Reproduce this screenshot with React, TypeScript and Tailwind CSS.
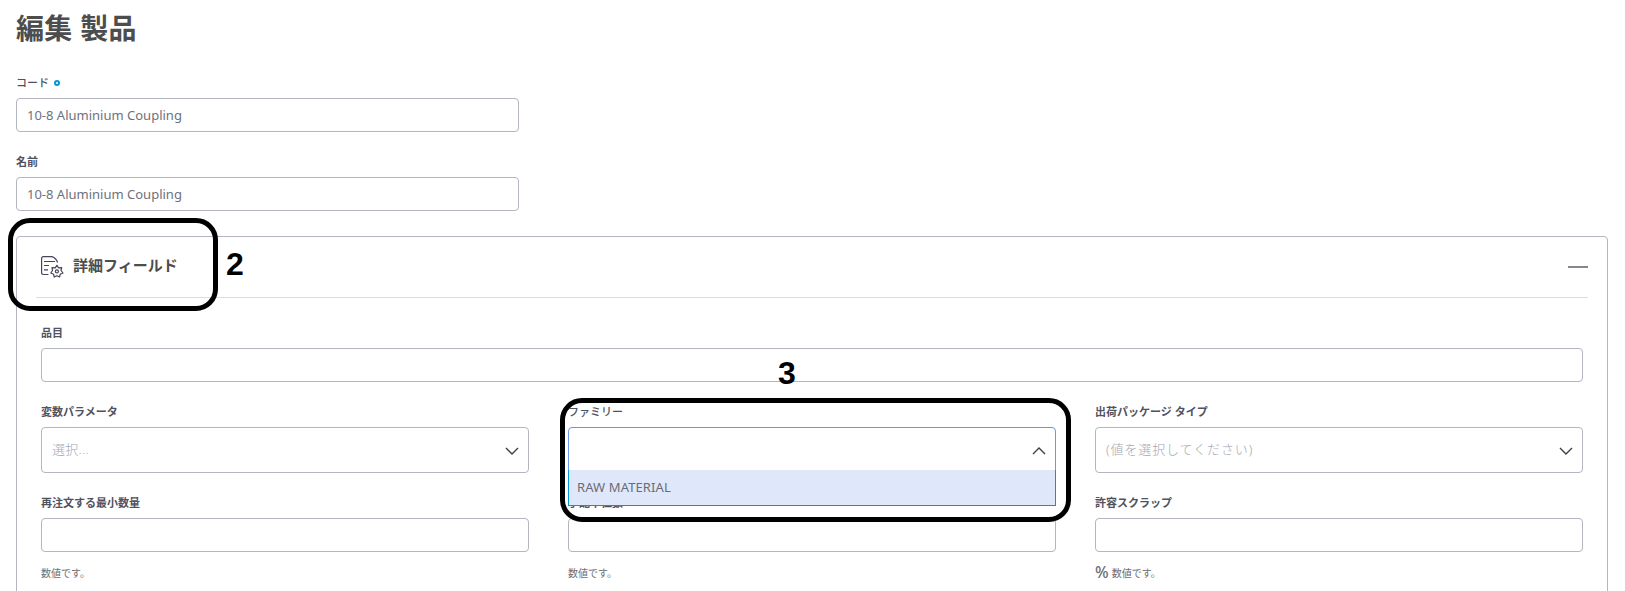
import React from "react";

const box = "w-full rounded-[4px] border border-[#b3b5c0] bg-white";

function Label({ children, weight = "font-bold" }: { children?: React.ReactNode; weight?: string }) {
  return (
    <div className={`flex h-[14px] items-center whitespace-nowrap text-[11px] leading-[14px] text-[#50525f] ${weight}`}>
      {children}
    </div>
  );
}

function TextField({ label, value, required }: { label: string; value?: string; required?: boolean }) {
  return (
    <div>
      <Label weight={required ? "font-medium" : "font-bold"}>
        {label}
        {required && <span className="ml-[5px] size-[6px] rounded-full border-2 border-[#0696d7]" />}
      </Label>
      <div className={`${box} mt-[8px] flex h-[34px] items-center px-[10px] pt-[2px] text-[13px] text-[#6f717b]`}>{value}</div>
    </div>
  );
}

function Chevron({ up }: { up?: boolean }) {
  return (
    <svg className="mt-px" width="14" height="8" viewBox="0 0 14 8" fill="none" stroke="#3c3c4a" strokeWidth="1.4">
      <path d={up ? "M1 7 L7 1 L13 7" : "M1 1 L7 7 L13 1"} />
    </svg>
  );
}

function Select({
  label,
  placeholder,
  option,
  placeholderClass = "",
}: {
  label: string;
  placeholder?: string;
  option?: string;
  placeholderClass?: string;
}) {
  return (
    <div className="relative">
      <Label weight={option ? "font-medium" : "font-bold"}>{label}</Label>
      <div
        className={`mt-[8px] flex h-[46px] w-full items-center justify-between rounded-[4px] border bg-white pl-[10px] pr-[9px] text-[13px] font-light text-[#a5a8b3] ${option ? "border-[#6c95ec]" : "border-[#b3b5c0]"}`}
      >
        <span className={placeholderClass}>{placeholder}</span>
        <Chevron up={!!option} />
      </div>
      {option && (
        <div className="absolute left-0 top-[65px] z-10 flex h-[36px] w-full items-center border border-t-0 border-[#0696d7] bg-[#dfe8fa] pl-[8px] text-[13px] tracking-[0.1px] text-[#6a6c75]">
          {option}
        </div>
      )}
    </div>
  );
}

function NumberField({ label, percent }: { label: string; percent?: boolean }) {
  return (
    <div>
      <TextField label={label} />
      <div className="mt-[13px] flex h-[16px] items-center text-[10px] text-[#6c6e74]">
        {percent && <span className="mr-[3px] mt-[-3px] text-[16px] font-medium">%</span>}
        <span className={percent ? "mt-px" : ""}>数値です。</span>
      </div>
    </div>
  );
}

function FieldsIcon() {
  return (
    <svg width="24" height="24" viewBox="0 0 24 24" fill="none" stroke="#45455a" strokeWidth="1.2">
      <path d="M7.500 19.500H2.500Q.6 19.500 .6 17.600V3.500Q.6 1.600 2.500 1.600H11Q15 3 16.600 7.500" />
      <path d="M3 6.500H14M3 10.500H8M3 14.800H7" />
      <path
        strokeLinejoin="round"
        d="M15.900 10.300 17.500 12.800 20.700 12.700 20 15.500 22 18 19.200 19.200 18.600 22 15.900 20.700 13.200 22 12.600 19.200 9.800 18 11.500 15.500 11 12.700 14.200 12.800Z"
      />
      <circle cx="15.900" cy="16.400" r="1.500" />
    </svg>
  );
}

export default function App() {
  return (
    <main
      lang="ja"
      className="relative h-[591px] w-full overflow-hidden bg-white pl-[16px] pr-[17px] pt-[10px] font-['Noto_Sans','Noto_Sans_CJK_JP',sans-serif]"
    >
      <h1 className="h-[36px] text-[28px] font-bold leading-[36px] tracking-[0.3px] text-[#4d4d4d]">編集 製品</h1>
      <div className="mt-[30px] flex w-[503px] flex-col gap-[23px]">
        <TextField label="コード" value="10-8 Aluminium Coupling" required />
        <TextField label="名前" value="10-8 Aluminium Coupling" />
      </div>
      <section className="mt-[25px] h-[400px] rounded-[4px] border border-[#b3b5c0]">
        <header className="mx-[19px] flex h-[61px] items-center border-b border-[#dcdde1] pl-[5px]">
          <FieldsIcon />
          <h2 className="mb-[4px] ml-[8px] text-[15px] font-bold text-[#4d4d4d]">詳細フィールド</h2>
          <span className="ml-auto h-[2px] w-[20px] bg-[#85868e]" />
        </header>
        <div className="ml-[24px] mr-[24px] mt-[28px]">
          <TextField label="品目" />
          <div className="mt-[23px] grid grid-cols-3 gap-x-[39px] gap-y-[23px]">
            <Select label="変数パラメータ" placeholder="選択..." placeholderClass="tracking-[0.3px]" />
            <Select label="ファミリー" option="RAW MATERIAL" />
            <Select label="出荷パッケージ タイプ" placeholder="(値を選択してください)" placeholderClass="tracking-[0.9px]" />
            <NumberField label="再注文する最小数量" />
            <NumberField label="手配単位数" />
            <NumberField label="許容スクラップ" percent />
          </div>
        </div>
      </section>

      <div className="absolute left-[8px] top-[218px] h-[93px] w-[210px] rounded-[22px] border-[5px] border-black" />
      <span className="absolute left-[226px] top-[246px] font-['Liberation_Sans',sans-serif] text-[32px] font-bold leading-[36px] text-black">2</span>
      <div className="absolute left-[560px] top-[398px] z-20 h-[124px] w-[511px] rounded-[22px] border-[5px] border-black" />
      <span className="absolute left-[778px] top-[355px] font-['Liberation_Sans',sans-serif] text-[32px] font-bold leading-[36px] text-black">3</span>
    </main>
  );
}
